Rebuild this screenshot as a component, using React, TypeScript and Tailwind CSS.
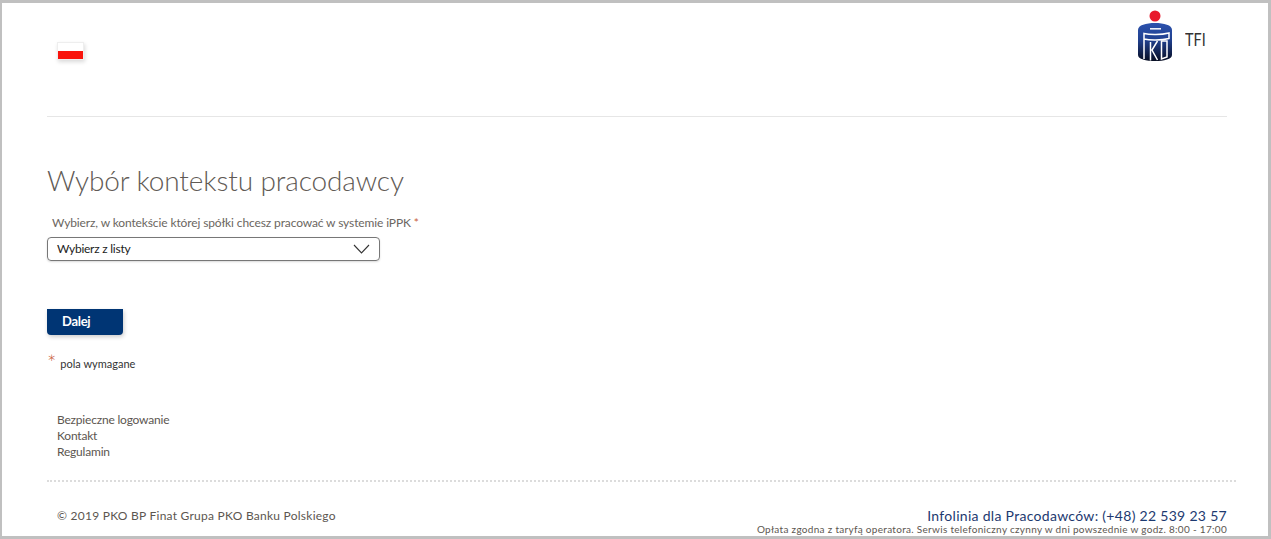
export default function App() {
  return (
    <div className="h-[539px] w-[1271px] overflow-hidden border-t-[3px] border-r-[3px] border-b-[3px] border-l-[2px] border-[#c0c0c0] bg-white font-['Lato',sans-serif] text-[#333]">
      <header className="mx-[45px] flex h-[114px] w-[1180px] items-start justify-between border-b border-[#e6e6e6]">
        <div className="mt-[39px] ml-[10px] h-[18px] w-[27px] border border-[#eee] bg-white shadow-[1px_2px_4px_rgba(0,0,0,0.15)]">
          <div className="mt-[8px] h-[8px] bg-[#f9140c]" />
        </div>
        <div className="mt-[7px] mr-[16px] flex items-center">
          <svg width="36" height="52" viewBox="0 0 36 52">
            <defs>
              <linearGradient id="pko" x1="0" y1="0" x2="0" y2="1">
                <stop offset="0" stopColor="#2c52ae" />
                <stop offset="0.45" stopColor="#20408e" />
                <stop offset="1" stopColor="#070d22" />
              </linearGradient>
            </defs>
            <circle cx="18" cy="6" r="5.5" fill="#e8192c" />
            <path d="M1 20 C1 15 9 13 18 13 C27 13 35 15 35 20 V45 C35 49 27 51 18 51 C9 51 1 49 1 45 Z" fill="url(#pko)" />
            <rect x="13" y="18" width="11" height="1.6" fill="#eef2fa" />
            <path d="M7 49 V23.5 C13 25 24 25 32 23 V28.5 C24 30.5 13 30.5 7 29" stroke="#fff" strokeWidth="1.5" fill="none" />
            <path d="M13.5 32 V50.5 M20.5 31 L15 40 L20.5 50" stroke="#fff" strokeWidth="1.5" fill="none" />
            <path d="M24.5 31 H30 V47 L24.5 49 Z" stroke="#fff" strokeWidth="1.5" fill="none" />
          </svg>
          <span className="mt-[6px] ml-[12px] origin-left scale-x-[0.8] text-[18px] leading-none text-[#333]">TFI</span>
        </div>
      </header>

      <main className="mx-[45px]">
        <h1 className="mt-[44px] text-[28px] leading-[38px] font-light tracking-[-0.12px] text-[#5f5a55]">Wybór kontekstu pracodawcy</h1>
        <label className="mt-[16px] ml-[5px] block text-[12px] leading-[16px] tracking-[-0.12px] text-[#6b6661]">
          Wybierz, w kontekście której spółki chcesz pracować w systemie iPPK <span className="text-[#c9603a]">*</span>
        </label>
        <div className="mt-[6px] flex h-[24px] w-[333px] items-center justify-between rounded-[4px] border border-[#777] px-[9px] text-[12px] tracking-[-0.25px] text-[#222] shadow-[0_1px_2px_rgba(0,0,0,0.15)]">
          <span>Wybierz z listy</span>
          <svg width="17" height="10" viewBox="0 0 17 10" fill="none" stroke="#333" strokeWidth="1.1">
            <path d="M1 1 L8.5 9 L16 1" />
          </svg>
        </div>
        <button className="mt-[48px] block h-[26px] w-[76px] rounded-[0_0_4px_4px] bg-[#003574] pl-[15px] text-left text-[13px] font-bold tracking-[-0.3px] text-white shadow-[1px_2px_4px_rgba(0,0,0,0.2)]">
          Dalej
        </button>
        <p className="mt-[16px] flex h-[20px] items-start text-[11px] leading-[20px] text-[#333]">
          <span className="text-[22px] leading-[24px] font-light text-[#c9603a]">*</span>
          <span className="mt-[3px] ml-[4px]">pola wymagane</span>
        </p>
      </main>

      <nav className="mt-[41px] ml-[55px] flex flex-col text-[12px] leading-[16px] tracking-[-0.2px] text-[#5c5650]">
        <a>Bezpieczne logowanie</a>
        <a>Kontakt</a>
        <a>Regulamin</a>
      </nav>

      <footer className="mx-[45px] mt-[20px] w-[1189px] border-t-2 border-dotted border-[#dcdcdc] pt-[26px]">
        <div className="flex w-[1180px] items-start justify-between">
          <span className="ml-[10px] text-[12px] leading-[16px] tracking-[0.25px] text-[#5c5650]">© 2019 PKO BP Finat Grupa PKO Banku Polskiego</span>
          <div className="text-right">
            <div className="text-[14px] leading-[16px] tracking-[0.3px] text-[#1d3a70]">Infolinia dla Pracodawców: (+48) 22 539 23 57</div>
            <div className="text-[10px] leading-[11px] tracking-[0.3px] text-[#5c5650]">Opłata zgodna z taryfą operatora. Serwis telefoniczny czynny w dni powszednie w godz. 8:00 - 17:00</div>
          </div>
        </div>
      </footer>
    </div>
  );
}
